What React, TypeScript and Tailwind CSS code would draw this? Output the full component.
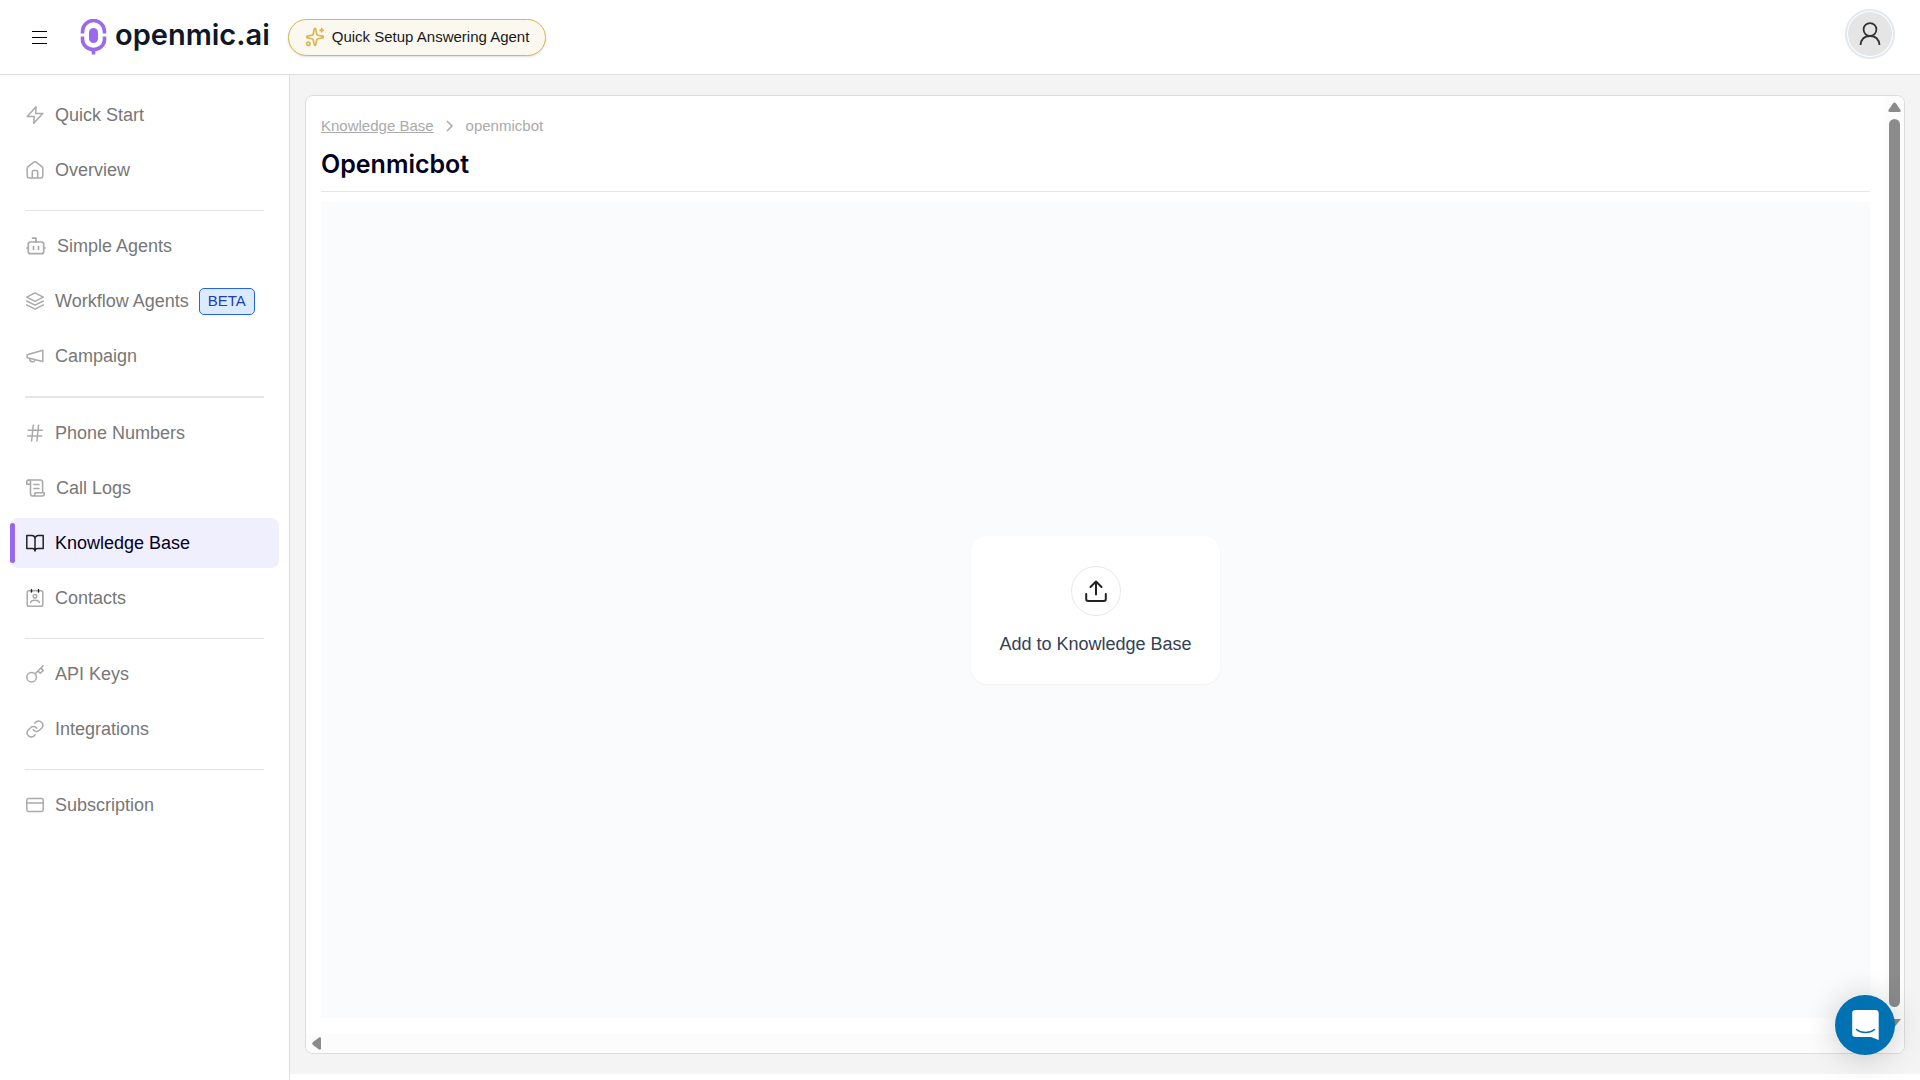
import type { ReactNode } from "react";

type IconProps = { children: ReactNode; width?: number; stroke?: number };

function Icon({ children, width = 18, stroke = 1.5 }: IconProps) {
  return (
    <svg
      width={width}
      height={18}
      viewBox={`0 0 ${width} 18`}
      fill="none"
      stroke="currentColor"
      strokeWidth={stroke}
      strokeLinecap="round"
      strokeLinejoin="round"
      className="shrink-0"
      aria-hidden="true"
    >
      {children}
    </svg>
  );
}

type Item = { label: string; icon: ReactNode; active?: boolean; beta?: boolean };

const groups: Item[][] = [
  [
    {
      label: "Quick Start",
      icon: (
        <Icon>
          <path d="M10 .8 1.3 10.6h6.9L7.8 17.2l8.9-9.8H9.8z" />
        </Icon>
      ),
    },
    {
      label: "Overview",
      icon: (
        <Icon>
          <path d="M1.2 7.5c0-.8.3-1.4.9-1.9L7.6 1.3c.9-.7 1.9-.7 2.8 0l5.5 4.3c.6.5.9 1.1.9 1.9v7.2c0 1.4-.8 2.2-2.2 2.2H3.4c-1.4 0-2.2-.8-2.2-2.2z" />
          <path d="M6.3 16.7v-6c0-.8.5-1.3 1.3-1.3h2.8c.8 0 1.3.5 1.3 1.3v6" />
        </Icon>
      ),
    },
  ],
  [
    {
      label: "Simple Agents",
      icon: (
        <Icon width={20} stroke={1.7}>
          <path d="M6.5 1.2H10v4" />
          <rect x="2.3" y="5" width="15.4" height="11.7" rx="2" />
          <path d="M.8 11h1.5M17.7 11h1.5M7.5 9.5v3M12.5 9.5v3" />
        </Icon>
      ),
    },
    {
      label: "Workflow Agents",
      beta: true,
      icon: (
        <Icon>
          <path d="m9 .9 8.3 4.2L9 9.3.7 5.1zM.7 12.9 9 17.1l8.3-4.2M.7 9 9 13.2 17.3 9" />
        </Icon>
      ),
    },
    {
      label: "Campaign",
      icon: (
        <Icon>
          <path d="M1.2 7.8 16.8 3.2v11.2L1.2 10.8z" />
          <path d="M9.2 12.6c-.5 1.7-1.8 2.6-3.4 2.2-1.5-.4-2.3-1.8-1.9-3.4" />
        </Icon>
      ),
    },
  ],
  [
    {
      label: "Phone Numbers",
      icon: (
        <Icon>
          <path d="M2.2 6.3h14.2M1.6 12h14.2M7.3 1.2 5.6 17M12.6 1.2 10.9 17" />
        </Icon>
      ),
    },
    {
      label: "Call Logs",
      icon: (
        <Icon width={19} stroke={1.6}>
          <path d="M16.6 13V3a2 2 0 0 0-2-2H2.6" />
          <path d="M.8 5.2h3.7V2.9a1.85 1.85 0 1 0-3.7 0zM4.5 5.2v9.6a2.2 2.2 0 0 0 2.2 2.2h9.5a2 2 0 0 0 2-2v-1.3H9v1.3a2.2 2.2 0 0 1-2.3 2M8 5.5h5M8 9.5h5" />
        </Icon>
      ),
    },
    {
      label: "Knowledge Base",
      active: true,
      icon: (
        <Icon>
          <path d="M.8 1.5h4.9A3.3 3.3 0 0 1 9 4.8v12.3a2.6 2.6 0 0 0-2.6-2.6H.8zM17.2 1.5h-4.9A3.3 3.3 0 0 0 9 4.8v12.3a2.6 2.6 0 0 1 2.6-2.6h5.6z" />
        </Icon>
      ),
    },
    {
      label: "Contacts",
      icon: (
        <Icon>
          <rect x="1.2" y="1.8" width="15.6" height="15.4" rx="1.8" />
          <circle cx="9" cy="7.2" r="1.8" />
          <path d="M4.6 13.6c.2-1.6 1.5-2.3 4.4-2.3s4.2.7 4.400 2.300" />
          <path d="M5.500.8v2.200M12.500.8v2.200" stroke="#222222" />
        </Icon>
      ),
    },
  ],
  [
    {
      label: "API Keys",
      icon: (
        <Icon>
          <circle cx="5.6" cy="12.2" r="4.8" />
          <path d="m9.2 8.7 7.9-7.9M12 6l2.3 2.3 3-2.9-2.4-2.3" />
        </Icon>
      ),
    },
    {
      label: "Integrations",
      icon: (
        <Icon>
          <path d="M7.2 9.8a4.1 4.1 0 0 0 6.2.4l2.6-2.5A4.15 4.15 0 0 0 10.200 1.900L8.800 3.300" />
          <path d="M10.800 8.200a4.1 4.1 0 0 0-6.200-.4L2 10.300A4.150 4.150 0 0 0 7.800 16.100l1.400-1.400" />
        </Icon>
      ),
    },
  ],
  [
    {
      label: "Subscription",
      icon: (
        <Icon>
          <rect x=".8" y="2.600" width="16.400" height="12.800" rx="1.600" />
          <path d="M.8 7h16.400" />
        </Icon>
      ),
    },
  ],
];

function NavItem({ label, icon, active, beta }: Item) {
  return (
    <a
      href="#"
      aria-current={active ? "page" : undefined}
      className={
        active
          ? "flex h-[50px] items-center rounded-lg bg-[#f0effd] text-lg text-[#020022]"
          : "flex h-[50px] items-center rounded-lg text-lg text-[#777777]"
      }
    >
      <span className={active ? "h-10 w-[5px] rounded-sm bg-[#9766ee]" : "h-10 w-[5px]"} />
      <span className={active ? "ml-[11px] text-[#222222]" : "ml-[11px] text-[#aaaaaa]"}>{icon}</span>
      <span className="ml-[11px] whitespace-nowrap">{label}</span>
      {beta && (
        <span className="ml-[10px] rounded-[5px] border border-[#2563eb] bg-[#dbeafe] px-2 pb-px text-[15px] leading-6 text-[#1e40af]">
          BETA
        </span>
      )}
    </a>
  );
}

function Header() {
  return (
    <header className="flex h-[75px] shrink-0 items-center border-b border-[#dddddd] bg-white pr-[25px] pl-8">
      <button type="button" aria-label="Toggle menu" className="flex flex-col gap-[5px]">
        <span className="h-px w-[15px] bg-black" />
        <span className="h-px w-[15px] bg-black" />
        <span className="h-px w-[15px] bg-black" />
      </button>
      <a href="#" className="ml-[33px] flex items-center gap-2">
        <svg width="27" height="36" viewBox="0 0 27 36" fill="none" aria-hidden="true">
          <path
            d="M2.500 14.500v-1.500a11 11.500 0 0 1 22 0v1.500M2.500 17.500v3a11 10 0 0 0 22 0v-3M13.500 30v5.500"
            stroke="#9b6aec"
            strokeWidth="3.600"
          />
          <rect x="9" y="9" width="9" height="15" rx="4.500" fill="#9b6aec" />
        </svg>
        <span className="pb-1 font-[Inter,sans-serif] text-[29px] leading-8 font-semibold text-[#0f172a]">
          openmic.ai
        </span>
      </a>
      <button
        type="button"
        className="ml-[18px] flex h-[37px] items-center rounded-full border border-[#dcb450] bg-[#fbf8ef] px-4 text-[15px] text-[#18181b] shadow-sm"
      >
        <svg
          width="20"
          height="20"
          viewBox="0 0 24 24"
          fill="none"
          stroke="#dcb450"
          strokeWidth="2"
          strokeLinecap="round"
          strokeLinejoin="round"
          aria-hidden="true"
        >
          <path d="M11.017 2.814a1 1 0 0 1 1.966 0l1.051 5.558a2 2 0 0 0 1.594 1.594l5.558 1.051a1 1 0 0 1 0 1.966l-5.558 1.051a2 2 0 0 0-1.594 1.594l-1.051 5.558a1 1 0 0 1-1.966 0l-1.051-5.558a2 2 0 0 0-1.594-1.594l-5.558-1.051a1 1 0 0 1 0-1.966l5.558-1.051a2 2 0 0 0 1.594-1.594zM20 2v4M22 4h-4" />
          <circle cx="4" cy="20" r="2" />
        </svg>
        <span className="ml-[7px] whitespace-nowrap">Quick Setup Answering Agent</span>
      </button>
      <button
        type="button"
        aria-label="Account"
        className="mb-[7px] ml-auto flex size-[50px] items-center justify-center rounded-full border-2 border-[#e2e8f0] bg-white p-px"
      >
        <span className="flex size-full items-center justify-center rounded-full bg-[#e5e5e5]">
          <svg width="22" height="24" viewBox="0 0 22 24" fill="none" stroke="#333333" strokeWidth="1.800" aria-hidden="true">
            <circle cx="11" cy="7.500" r="6.400" />
            <path d="M1.500 23c.6-5.600 4.200-9 9.500-9s8.900 3.400 9.500 9" />
          </svg>
        </span>
      </button>
    </header>
  );
}

export default function App() {
  return (
    <div className="flex h-screen flex-col overflow-hidden bg-white font-['Liberation_Sans',Arial,sans-serif]">
      <Header />
      <div className="flex min-h-0 flex-1">
        <nav className="w-[290px] shrink-0 border-r border-[#dddddd] px-[10px] pt-[15px]">
          {groups.map((group, i) => (
            <div key={i}>
              {i > 0 && (
                <hr
                  className={
                    i === 2
                      ? "mx-[15px] mt-[15px] mb-[10px] border-t-2 border-[#e5e5e5]"
                      : "mx-[15px] mt-[15px] mb-[10px] border-[#e5e5e5]"
                  }
                />
              )}
              <div className="flex flex-col gap-[5px]">
                {group.map((item) => (
                  <NavItem key={item.label} {...item} />
                ))}
              </div>
            </div>
          ))}
        </nav>
        <main className="mb-[6px] flex min-w-0 flex-1 bg-[#f4f4f4] px-[15px] py-5">
          <section className="flex min-w-0 flex-1 overflow-hidden rounded-lg border border-[#dddddd] bg-white">
            <div className="flex min-w-0 flex-1 flex-col">
              <div className="flex flex-1 flex-col px-[15px] pt-5 pb-4">
                <div className="flex items-center text-[15px] leading-5 text-[#aaaaaa]">
                  <a href="#" className="underline">
                    Knowledge Base
                  </a>
                  <svg width="8" height="12" viewBox="0 0 8 12" className="mx-3" fill="none" stroke="#aaaaaa" strokeWidth="1.500" aria-hidden="true">
                    <path d="m1 1 5 5-5 5" />
                  </svg>
                  <span>openmicbot</span>
                </div>
                <h1 className="mt-3 border-b border-[#e2e8f0] pb-[11px] font-[Inter,sans-serif] text-[25px] leading-8 font-semibold text-[#020022]">
                  Openmicbot
                </h1>
                <div className="mt-[10px] flex flex-1 items-center justify-center bg-[#fafbfd]">
                  <button
                    type="button"
                    className="flex h-[148px] w-[249px] flex-col items-center rounded-2xl bg-white pt-[30px] text-lg text-[#334155] shadow-xs"
                  >
                    <span className="flex size-[50px] items-center justify-center rounded-full border border-[#e2e8f0] text-[#222222]">
                      <svg width="22" height="22" viewBox="0 0 22 22" fill="none" stroke="currentColor" strokeWidth="2" strokeLinecap="round" strokeLinejoin="round" aria-hidden="true">
                        <path d="M11 14.500V1.500M5.500 7 11 1.500 16.500 7M1.200 14v5a2 2 0 0 0 2 2h15.600a2 2 0 0 0 2-2v-5" />
                      </svg>
                    </span>
                    <span className="mt-[14px] whitespace-nowrap">Add to Knowledge Base</span>
                  </button>
                </div>
              </div>
              <div className="flex h-[19px] shrink-0 items-center bg-[#fcfcfc] pl-[6px]">
                <svg width="9" height="13" viewBox="0 0 9 13" fill="#8b8b8b" aria-hidden="true">
                  <path d="M9 1.500v10c0 1-1 1.500-2 1L1 8Q-.5 6.500 1 5L7 .5c1-.5 2 0 2 1z" />
                </svg>
              </div>
            </div>
            <div className="flex w-[19px] shrink-0 flex-col items-center bg-[#fcfcfc] pt-[6px] pb-[26px]">
              <svg width="13" height="10" viewBox="0 0 13 10" fill="#8b8b8b" className="shrink-0" aria-hidden="true">
                <path d="M1.500 10h10c1 0 1.500-1 1-2L8 1.500Q6.500-.5 5 1.500L.5 8c-.5 1 0 2 1 2z" />
              </svg>
              <div className="mt-[7px] mb-3 w-[11px] flex-1 rounded-full bg-[#8b8b8b]" />
              <svg width="13" height="8" viewBox="0 0 13 8" fill="#8b8b8b" className="shrink-0" aria-hidden="true">
                <path d="M0 0h13L6.500 8z" />
              </svg>
            </div>
          </section>
        </main>
      </div>
      <button
        type="button"
        aria-label="Open chat"
        className="fixed right-[25px] bottom-[25px] flex size-[60px] items-center justify-center rounded-full bg-[#0071b2] shadow-[0_2px_32px_rgba(0,0,0,0.2)]"
      >
        <svg width="27" height="30" viewBox="0 0 27 30" aria-hidden="true">
          <path d="M3.500 0h20A3.300 3.300 0 0 1 26.700 3.300V30L19 27H3.500A3.300 3.300 0 0 1 .2 23.700V3.300A3.300 3.300 0 0 1 3.500 0z" fill="white" />
          <path d="M4.500 19.500c5 4 13 4 18 0" fill="none" stroke="#0071b2" strokeWidth="1.600" strokeLinecap="round" />
        </svg>
      </button>
    </div>
  );
}
